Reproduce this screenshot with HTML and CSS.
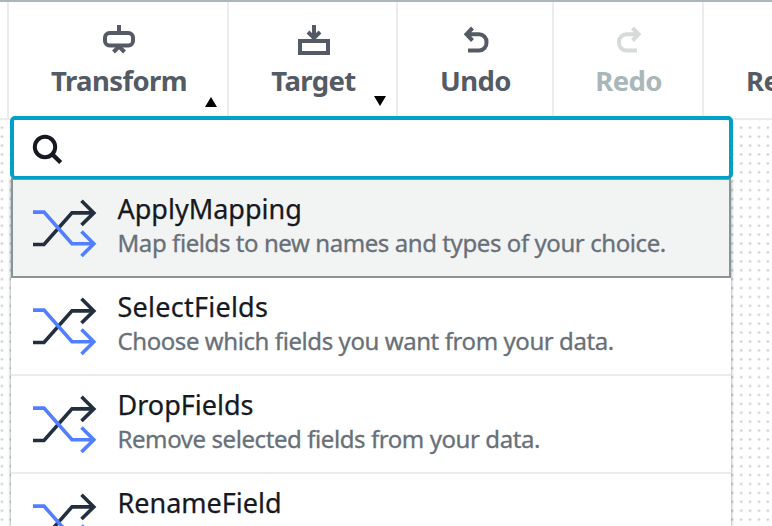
FILE: index.html
```html
<!DOCTYPE html>
<html lang="en">
<head>
<meta charset="utf-8">
<title>Transform</title>
<link rel="stylesheet" href="styles.css">
</head>
<body>
<svg width="0" height="0" class="defs">
  <symbol id="shuffle" viewBox="0 0 66 60">
    <path d="M1 46.500h11L40 14.900h22" fill="none" stroke="#232f3e" stroke-width="3.600"/>
    <path d="M49.500 2.800l12.300 12.100L49.500 27" fill="none" stroke="#232f3e" stroke-width="3.600"/>
    <path d="M1 14.100h11l28 31.600h22" fill="none" stroke="#527fff" stroke-width="3.600"/>
    <path d="M49.500 33.500l12.300 12.200L49.500 58" fill="none" stroke="#527fff" stroke-width="3.600"/>
  </symbol>
</svg>
<div class="toolbar">
  <div class="tool edge"></div>
  <div class="tool transform">
    <svg class="icon" width="34" height="34" viewBox="0 0 34 34"><path d="M17 3v8M11.500 30l5.500-5.500 5.500 5.500" class="line"/><rect x="3" y="11" width="28" height="12.500" rx="4.500" class="line"/></svg>
    <span class="label">Transform</span><i class="caret up"></i>
  </div>
  <div class="tool target">
    <svg class="icon" width="34" height="34" viewBox="0 0 34 34"><path d="M17 3v13M11 10l6 6 6-6" class="line"/><path d="M3 19h28v12H3z" class="line"/></svg>
    <span class="label">Target</span><i class="caret down"></i>
  </div>
  <div class="tool undo">
    <svg class="icon" width="34" height="34" viewBox="0 0 34 34"><path d="M13.500 6l-6 6.300 6 6.200M7.500 12.300h12.500a7.500 7.500 0 0 1 7.500 8v0.200a7.500 7.500 0 0 1-7.500 8H9" class="line"/></svg>
    <span class="label">Undo</span>
  </div>
  <div class="tool redo">
    <svg class="icon" width="34" height="34" viewBox="0 0 34 34"><path d="M20.500 6l6 6.300-6 6.200M26.500 12.300H14.500a7.500 7.500 0 0 0-7.500 8v0.200a7.500 7.500 0 0 0 7.500 8H25" class="line"/></svg>
    <span class="label">Redo</span>
  </div>
  <div class="tool remove"><span class="label">Remove</span></div>
</div>
<div class="canvas"></div>
<div class="menu">
  <div class="search"><svg width="34" height="34" viewBox="0 0 34 34"><circle cx="13" cy="13" r="10.200" fill="none" stroke="#16191f" stroke-width="4"/><path d="M20 20l8.700 8.500" stroke="#16191f" stroke-width="4.400"/></svg></div>
  <ul class="list">
    <li class="item active"><svg class="pic"><use href="#shuffle"/></svg><div><div class="name">ApplyMapping</div><div class="desc">Map fields to new names and types of your choice.</div></div></li>
    <li class="item"><svg class="pic"><use href="#shuffle"/></svg><div><div class="name wide">SelectFields</div><div class="desc">Choose which fields you want from your data.</div></div></li>
    <li class="item"><svg class="pic"><use href="#shuffle"/></svg><div><div class="name">DropFields</div><div class="desc">Remove selected fields from your data.</div></div></li>
    <li class="item"><svg class="pic"><use href="#shuffle"/></svg><div><div class="name">RenameField</div></div></li>
  </ul>
</div>
</body>
</html>
```
FILE: styles.css
```css
* { box-sizing: border-box; }
body {
  margin: 0;
  width: 772px;
  height: 526px;
  overflow: hidden;
  position: relative;
  background: #fff;
  font-family: "Noto Sans", sans-serif;
}
.defs { position: absolute; }
.toolbar {
  display: flex;
  height: 120px;
  border-top: 2px solid #aab7b8;
  border-bottom: 2px solid #eaeded;
  overflow: hidden;
}
.tool {
  position: relative;
  flex: none;
  display: flex;
  flex-direction: column;
  align-items: center;
  padding: 20px 0 0 2px;
  border-right: 2px solid #eaeded;
  color: #545b64;
}
.edge { width: 9px; }
.transform { width: 220px; }
.target { width: 169px; }
.undo { width: 156px; padding-left: 1px; }
.redo { width: 150px; padding-left: 1px; color: #aab7b8; }
.remove { width: 180px; padding: 54px 0 0 42px; align-items: flex-start; }
.icon { display: block; }
.line { fill: none; stroke: currentColor; stroke-width: 4; }
.redo .icon { color: #d5dbdb; }
.label { font-size: 27.5px; font-weight: 700; line-height: 50px; letter-spacing: -.6px; }
.caret { position: absolute; right: 10px; border: 6px solid transparent; }
.up { top: 95px; border-top: 0; border-bottom: 10px solid #000; }
.down { top: 94px; border-bottom: 0; border-top: 10px solid #000; }
.canvas {
  height: 406px;
  background: radial-gradient(circle, #c4caca 0.800px, transparent 1.500px) -2.500px 3.300px / 8.920px 8.920px;
}
.menu { position: absolute; left: 10px; top: 116px; width: 723px; }
.search {
  position: relative;
  z-index: 1;
  height: 63px;
  padding: 15px 18px;
  background: #fff;
  border: 4px solid #00a1c9;
  border-bottom-width: 3px;
  border-radius: 5px;
}
.search svg { display: block; margin-top: -1px; }
.list {
  height: 348px;
  overflow: hidden;
  margin: -1px 2px 0 1px;
  padding: 0;
  list-style: none;
  background: #fff;
  box-shadow: 0 2px 3px rgba(0, 28, 36, .5);
}
.item { display: flex; height: 98px; padding: 18px 0 0 21px; border-bottom: 2px solid #eaeded; }
.active { height: 100px; padding: 18px 0 0 19px; border: 2px solid #879596; background: #f2f3f3; }
.pic { width: 66px; height: 60px; margin-right: 19.5px; flex: none; }
.item > div { margin-top: -8px; }
.name { font-size: 27px; line-height: 38px; color: #16191f; white-space: nowrap; -webkit-text-stroke: .25px; }
.wide { letter-spacing: .25px; }
.desc { font-size: 24px; line-height: 30px; letter-spacing: -.42px; color: #687078; white-space: nowrap; -webkit-text-stroke: .3px; }
```
